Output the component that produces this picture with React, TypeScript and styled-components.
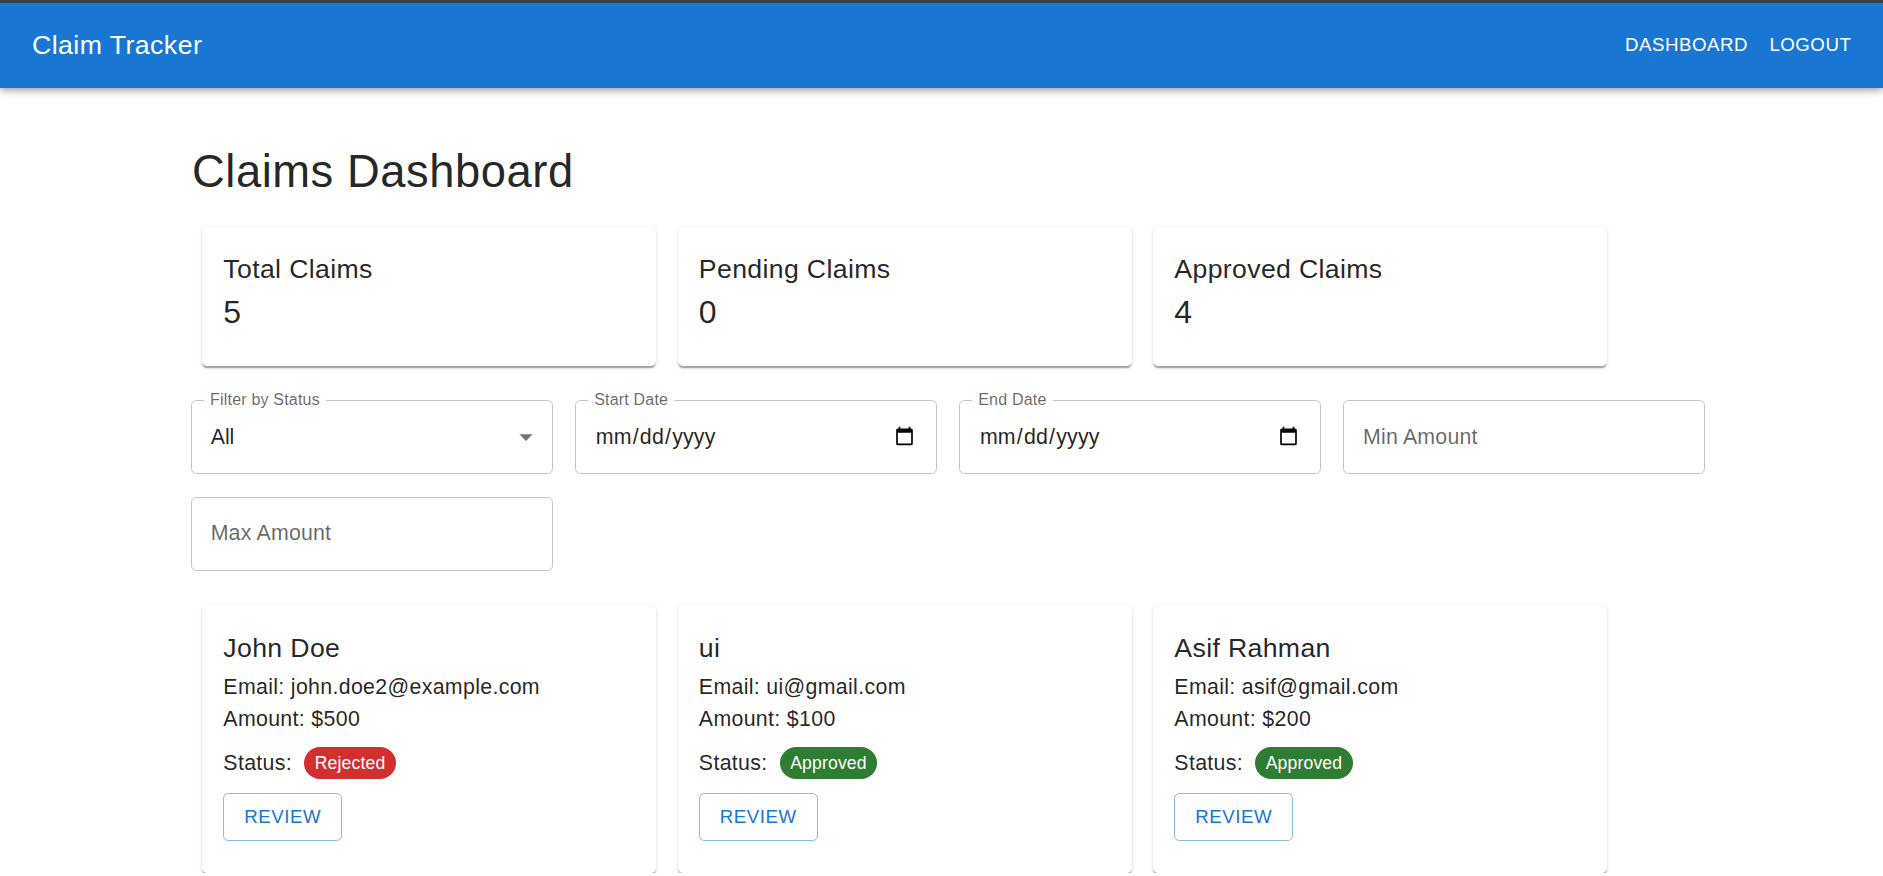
import * as React from 'react';
import styled, { createGlobalStyle } from 'styled-components';

const GlobalStyle = createGlobalStyle`
	*, *::before, *::after {
		box-sizing: border-box;
	}
	html, body {
		margin: 0;
		padding: 0;
		background: #fff;
		scrollbar-width: none;
	}
	::-webkit-scrollbar {
		display: none;
	}
	body {
		font-family: 'Liberation Sans', Arial, Helvetica, sans-serif;
		color: rgba(0, 0, 0, 0.87);
	}
`;

type Status = 'Approved' | 'Rejected' | 'Pending';

// only the claims that fit in the first screen
const claims: { name: string; email: string; amount: number; status: Status }[] = [
	{ name: 'John Doe', email: 'john.doe2@example.com', amount: 500, status: 'Rejected' },
	{ name: 'ui', email: 'ui@gmail.com', amount: 100, status: 'Approved' },
	{ name: 'Asif Rahman', email: 'asif@gmail.com', amount: 200, status: 'Approved' },
];

const stats = [
	{ label: 'Total Claims', value: 5 },
	{ label: 'Pending Claims', value: 0 },
	{ label: 'Approved Claims', value: 4 },
];

const DropIcon = () => (
	<svg width="32" height="32" viewBox="0 0 24 24" fill="rgba(0,0,0,0.54)">
		<path d="M7 10l5 5 5-5z" />
	</svg>
);

const App = () => {
	return (
		<>
			<GlobalStyle />
			<AppBar>
				<Toolbar>
					<Brand>Claim Tracker</Brand>
					<NavButton>Dashboard</NavButton>
					<NavButton>Logout</NavButton>
				</Toolbar>
			</AppBar>

			<Main>
				<PageTitle>Claims Dashboard</PageTitle>

				<CardGrid $top={27}>
					{stats.map((s) => (
						<Card key={s.label}>
							<CardTitle>{s.label}</CardTitle>
							<StatValue>{s.value}</StatValue>
						</Card>
					))}
				</CardGrid>

				<FilterGrid>
					<Field>
						<FieldLabel>Filter by Status</FieldLabel>
						<SelectInput defaultValue="All">
							<option>All</option>
							<option>Pending</option>
							<option>Approved</option>
							<option>Rejected</option>
						</SelectInput>
						<SelectArrow>
							<DropIcon />
						</SelectArrow>
					</Field>
					<Field>
						<FieldLabel>Start Date</FieldLabel>
						<TextInput type="date" />
					</Field>
					<Field>
						<FieldLabel>End Date</FieldLabel>
						<TextInput type="date" />
					</Field>
					<Field>
						<TextInput type="number" placeholder="Min Amount" />
					</Field>
					<Field>
						<TextInput type="number" placeholder="Max Amount" />
					</Field>
				</FilterGrid>

				<CardGrid $top={34}>
					{claims.map((c) => (
						<Card key={c.email}>
							<CardTitle $gap={2}>{c.name}</CardTitle>
							<InfoLine>Email: {c.email}</InfoLine>
							<InfoLine>Amount: ${c.amount}</InfoLine>
							<StatusRow>
								<span>Status:</span>
								<Chip $status={c.status}>{c.status}</Chip>
							</StatusRow>
							<ReviewButton>Review</ReviewButton>
						</Card>
					))}
				</CardGrid>
			</Main>
		</>
	);
};

const AppBar = styled.header`
	position: relative;
	z-index: 1;
	background-color: #1976d2;
	color: #fff;
	border-top: 3px solid #3a4047;
	box-shadow: 0 2.7px 5.3px -1.3px rgba(0, 0, 0, 0.2), 0 5.3px 6.7px 0 rgba(0, 0, 0, 0.14),
		0 1.3px 13.3px 0 rgba(0, 0, 0, 0.12);
`;

const Toolbar = styled.div`
	display: flex;
	align-items: center;
	height: 85px;
	padding: 0 21px 0 32px;
`;

const Brand = styled.div`
	flex: 1;
	font-size: 26.67px;
	line-height: 1.6;
	letter-spacing: 0.45px;
`;

const NavButton = styled.button`
	background: none;
	border: 0;
	color: #fff;
	font-family: inherit;
	font-size: 18.67px;
	line-height: 1.75;
	letter-spacing: 0.53px;
	text-transform: uppercase;
	padding: 8px 10.67px;
	cursor: pointer;
`;

const Main = styled.main`
	width: 1705px;
	padding: 56px 0 0 191px;
`;

const PageTitle = styled.h1`
	margin: 0;
	padding-left: 1px;
	font-size: 45.33px;
	font-weight: 400;
	line-height: 56px;
	letter-spacing: 0.55px;
`;

const CardGrid = styled.div<{ $top: number }>`
	display: grid;
	grid-template-columns: repeat(3, 454px);
	gap: 21.5px;
	margin: ${(p) => p.$top}px 0 0 11px;
`;

const Card = styled.div`
	background: #fff;
	border-radius: 5.33px;
	padding: 21.33px 21.33px 32px;
	box-shadow: 0 2.7px 1.3px -1.3px rgba(0, 0, 0, 0.2), 0 1.3px 1.3px 0 rgba(0, 0, 0, 0.14),
		0 1.3px 4px 0 rgba(0, 0, 0, 0.12);
`;

const CardTitle = styled.div<{ $gap?: number }>`
	margin-bottom: ${(p) => p.$gap ?? 0}px;
	font-size: 26.67px;
	line-height: 42.67px;
	letter-spacing: 0.35px;
`;

const StatValue = styled.div`
	font-size: 32px;
	line-height: 42.67px;
`;

const InfoLine = styled.div`
	font-size: 21.33px;
	line-height: 32px;
	letter-spacing: 0.33px;
`;

const StatusRow = styled.div`
	display: flex;
	align-items: center;
	height: 32px;
	margin-top: 12px;
	font-size: 21.33px;
	letter-spacing: 0.33px;
`;

const Chip = styled.span<{ $status: Status }>`
	display: inline-flex;
	align-items: center;
	height: 32px;
	margin-left: 12px;
	padding: 0 10.67px;
	border-radius: 16px;
	font-size: 17.6px;
	letter-spacing: 0.15px;
	color: #fff;
	background-color: ${(p) =>
		p.$status === 'Rejected' ? '#d32f2f' : p.$status === 'Approved' ? '#2e7d32' : '#ed6c02'};
`;

const ReviewButton = styled.button`
	display: block;
	margin-top: 14px;
	padding: 6.67px 20px;
	background: transparent;
	border: 1.33px solid rgba(25, 118, 210, 0.5);
	border-radius: 5.33px;
	color: #1976d2;
	font-family: inherit;
	font-size: 18.67px;
	line-height: 1.75;
	letter-spacing: 0.53px;
	text-transform: uppercase;
	cursor: pointer;
`;

const FilterGrid = styled.div`
	display: grid;
	grid-template-columns: repeat(4, 1fr);
	gap: 22.3px 22.5px;
	margin-top: 34px;
`;

const Field = styled.div`
	position: relative;
	height: 74.67px;
	border: 1px solid #c4c4c4;
	border-radius: 5.33px;
`;

const FieldLabel = styled.label`
	position: absolute;
	left: 12px;
	top: -11px;
	padding: 0 6px;
	background: #fff;
	font-size: 16px;
	line-height: 20px;
	letter-spacing: 0.2px;
	color: rgba(0, 0, 0, 0.6);
`;

const TextInput = styled.input`
	display: block;
	width: 100%;
	height: 100%;
	margin: 0;
	padding: 0 18.67px;
	border: 0;
	outline: 0;
	background: transparent;
	font-family: inherit;
	font-size: 21.33px;
	letter-spacing: 0.2px;
	color: rgba(0, 0, 0, 0.87);
	&::placeholder {
		color: rgba(0, 0, 0, 0.6);
		opacity: 1;
	}
	&::-webkit-calendar-picker-indicator {
		margin-left: 8px;
	}
	&::-webkit-inner-spin-button,
	&::-webkit-outer-spin-button {
		-webkit-appearance: none;
		margin: 0;
	}
`;

const SelectInput = styled.select`
	display: block;
	width: 100%;
	height: 100%;
	padding: 0 40px 0 18.67px;
	border: 0;
	outline: 0;
	background: transparent;
	appearance: none;
	font-family: inherit;
	font-size: 21.33px;
	color: rgba(0, 0, 0, 0.87);
`;

const SelectArrow = styled.span`
	position: absolute;
	right: 9.33px;
	top: 50%;
	transform: translateY(-50%);
	display: flex;
	pointer-events: none;
`;

export default App;
